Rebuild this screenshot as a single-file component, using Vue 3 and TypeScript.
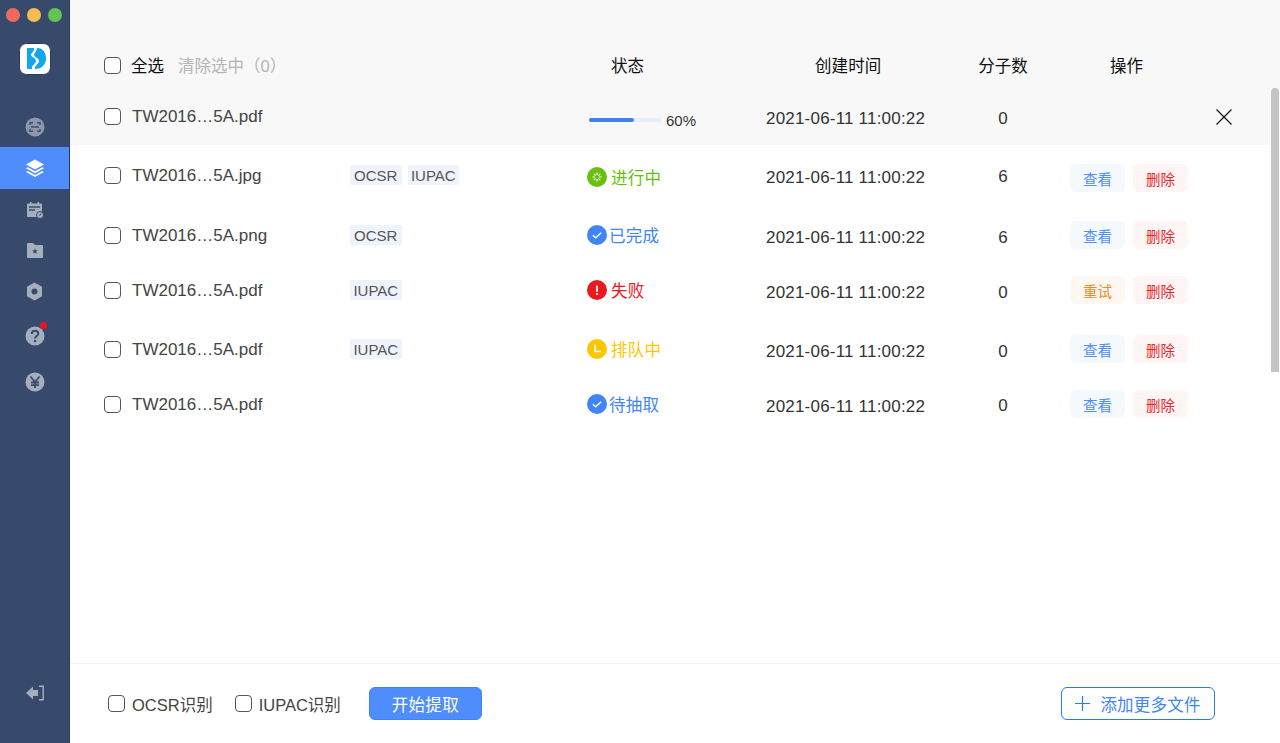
<script setup lang="ts">
type Status = 'running' | 'done' | 'failed' | 'queued' | 'waiting'

interface FileRow {
  name: string
  tags: string[]
  status: Status
  count: number
}

const statusText: Record<Status, string> = {
  running: '进行中',
  done: '已完成',
  failed: '失败',
  queued: '排队中',
  waiting: '待抽取',
}

const rows: FileRow[] = [
  { name: 'TW2016…5A.jpg', tags: ['OCSR', 'IUPAC'], status: 'running', count: 6 },
  { name: 'TW2016…5A.png', tags: ['OCSR'], status: 'done', count: 6 },
  { name: 'TW2016…5A.pdf', tags: ['IUPAC'], status: 'failed', count: 0 },
  { name: 'TW2016…5A.pdf', tags: ['IUPAC'], status: 'queued', count: 0 },
  { name: 'TW2016…5A.pdf', tags: [], status: 'waiting', count: 0 },
]

const progress = 60
const time = '2021-06-11 11:00:22'
</script>

<template>
  <div class="app">
    <aside class="sidebar">
      <div class="lights">
        <span class="light red"></span>
        <span class="light yellow"></span>
        <span class="light green"></span>
      </div>
      <div class="logo">
        <svg width="32" height="32" viewBox="0 0 32 32">
          <rect x="0.500" y="0.500" width="31" height="31" rx="7" fill="#fff" stroke="#2b3c5a" />
          <path d="M8 5h7c1 3-3 5-3 7s5 3 5 6-5 4-4 8H8z" fill="#12a6ee" />
          <path d="M18 5c6 0 9 5 9 10.500S23 26 16 26c-1-3 4-5 4-8s-5-4-5-6 3-4 3-7z" fill="#12a6ee" />
        </svg>
      </div>

      <nav class="nav">
        <div class="nav-item">
          <svg width="20" height="20" viewBox="0 0 20 20">
            <circle cx="10" cy="10" r="9.500" fill="#8d97a9" />
            <path d="M5 8V5.800h3M12 5.800h3V8M5 12v2.200h3M12 14.200h3V12M6 10h8" fill="none" stroke="#3f5070" stroke-width="1.500" />
          </svg>
        </div>
        <div class="nav-item active">
          <svg width="20" height="20" viewBox="0 0 20 20" fill="#fff">
            <path d="M10 1.500l9 5-9 5-9-5z" />
            <path d="M2.800 9.300L10 13.300l7.200-4 1.800 1-9 5-9-5z" />
            <path d="M2.800 13L10 17l7.200-4 1.800 1-9 5-9-5z" />
          </svg>
        </div>
        <div class="nav-item calendar">
          <svg width="18" height="17" viewBox="0 0 18 17">
            <path d="M2 1.500h2V0h1.500v1.500h6V0H13v1.500h2a1 1 0 0 1 1 1V14a1 1 0 0 1-1 1H2a1 1 0 0 1-1-1V2.500a1 1 0 0 1 1-1z" fill="#a5aebd" />
            <path d="M3 5h11M3 8h6" stroke="#3a4b6c" stroke-width="1.400" />
            <circle cx="14" cy="13" r="3.500" fill="#a5aebd" stroke="#3a4b6c" />
            <path d="M14.800 11.500L13.600 14" stroke="#3a4b6c" />
          </svg>
        </div>
        <div class="nav-item">
          <svg width="18" height="17" viewBox="0 0 18 17">
            <path d="M1 2a1 1 0 0 1 1-1h5l2 2h7a1 1 0 0 1 1 1v11a1 1 0 0 1-1 1H2a1 1 0 0 1-1-1z" fill="#a5aebd" />
            <path d="M9 6.500l.8 1.800 1.900.2-1.400 1.300.4 1.900L9 10.800l-1.700.9.400-1.900-1.400-1.300 1.900-.2z" fill="#3a4b6c" />
          </svg>
        </div>
        <div class="nav-item">
          <svg width="17" height="19" viewBox="0 0 17 19">
            <path d="M8.500 0.500l7.500 4.300v9.400l-7.500 4.300L1 14.200V4.800z" fill="#a5aebd" />
            <circle cx="8.500" cy="9.500" r="3" fill="#3a4b6c" />
          </svg>
        </div>
        <div class="nav-item help">
          <svg width="20" height="20" viewBox="0 0 20 20">
            <circle cx="10" cy="10" r="9.500" fill="#a5aebd" />
            <path d="M6.800 8c0-2 1.400-3.200 3.300-3.200s3.200 1.200 3.200 2.900c0 2.300-3.200 2.400-3.200 4.700" fill="none" stroke="#3a4b6c" stroke-width="2" />
            <circle cx="10.100" cy="15" r="1.300" fill="#3a4b6c" />
          </svg>
          <span class="dot"></span>
        </div>
        <div class="nav-item yen">
          <svg width="20" height="20" viewBox="0 0 20 20">
            <circle cx="10" cy="10" r="9.500" fill="#a5aebd" />
            <path d="M5.500 4.500L10 10l4.500-5.500M10 10v6M6 10.500h8M6 13.200h8" fill="none" stroke="#3a4b6c" stroke-width="1.800" />
          </svg>
        </div>
      </nav>

      <div class="logout">
        <svg width="20" height="16" viewBox="0 0 20 16">
          <path d="M1 8l7-6.500V5h5v6H8v3.500z" fill="#a5aebd" />
          <path d="M14 1.200h4.200v13.600H14" fill="none" stroke="#a5aebd" stroke-width="1.400" />
        </svg>
      </div>
    </aside>

    <main class="main">
      <header class="head grid">
        <div class="select-all">
          <span class="check"></span>
          <span class="all">全选</span>
          <span class="clear">清除选中（0）</span>
        </div>
        <div></div>
        <div class="h-status">状态</div>
        <div class="h-time">创建时间</div>
        <div class="h-count">分子数</div>
        <div class="h-action">操作</div>
      </header>

      <section class="list">
        <div class="row uploading grid">
          <div class="name-cell">
            <span class="check"></span>
            <span class="name">TW2016…5A.pdf</span>
          </div>
          <div></div>
          <div class="progress">
            <div class="track">
              <div class="fill" :style="{ width: progress + '%' }"></div>
            </div>
            <span class="percent">{{ progress }}%</span>
          </div>
          <div class="time">{{ time }}</div>
          <div class="count">0</div>
          <div class="close">
            <svg width="16" height="16" viewBox="0 0 16 16">
              <path d="M0.500 0.500l15 15M15.500 0.500l-15 15" stroke="#111" stroke-width="1.200" />
            </svg>
          </div>
        </div>

        <div v-for="(row, i) in rows" :key="i" class="row grid">
          <div class="name-cell">
            <span class="check"></span>
            <span class="name">{{ row.name }}</span>
          </div>
          <div class="tags">
            <span v-for="tag in row.tags" :key="tag" class="tag">{{ tag }}</span>
          </div>
          <div class="status" :class="row.status">
            <svg width="20" height="20" viewBox="0 0 20 20">
              <circle cx="10" cy="10" r="10" fill="currentColor" />
              <g v-if="row.status === 'running'" stroke="#fff" stroke-width="1.200">
                <path d="M10 5.500v2.500M10 12v2.500M5.500 10H8M12 10h2.500M6.800 6.800l1.800 1.800M11.400 11.400l1.800 1.800M13.200 6.800l-1.800 1.800M8.600 11.400l-1.800 1.800" />
              </g>
              <path v-else-if="row.status === 'done' || row.status === 'waiting'" d="M5.800 10.200l3 2.600 5.400-5" fill="none" stroke="#fff" stroke-width="1.300" />
              <g v-else-if="row.status === 'failed'" fill="#fff">
                <rect x="9.100" y="5.500" width="1.800" height="6.500" rx="0.800" />
                <circle cx="10" cy="14" r="1.100" />
              </g>
              <path v-else d="M8 5.500v7h6" fill="none" stroke="#fff" stroke-width="1.500" />
            </svg>
            <span>{{ statusText[row.status] }}</span>
          </div>
          <div class="time">{{ time }}</div>
          <div class="count">{{ row.count }}</div>
          <div class="actions">
            <button v-if="row.status === 'failed'" class="btn orange">重试</button>
            <button v-else class="btn blue">查看</button>
            <button class="btn pink">删除</button>
          </div>
        </div>

        <div class="scrollbar"></div>
      </section>

      <footer class="foot">
        <label class="opt"><span class="check"></span>OCSR识别</label>
        <label class="opt second"><span class="check"></span>IUPAC识别</label>
        <button class="start">开始提取</button>
        <button class="add">
          <svg width="15" height="15" viewBox="0 0 15 15">
            <path d="M7.500 0v15M0 7.500h15" stroke="#2f78ee" stroke-width="1.200" />
          </svg>
          添加更多文件
        </button>
      </footer>
    </main>
  </div>
</template>

<style>
html,
body {
  margin: 0;
  background: #fff;
}
</style>

<style scoped>
.app {
  display: flex;
  width: 1280px;
  height: 743px;
  overflow: hidden;
  font-family: "Liberation Sans", "Noto Sans CJK SC", sans-serif;
  font-size: 16.500px;
  color: #333;
}

.sidebar {
  flex: 0 0 70px;
  box-sizing: border-box;
  display: flex;
  flex-direction: column;
  align-items: center;
  background: #374a6b;
  border-right: 1px solid #2b3c5a;
}

.lights {
  display: flex;
  gap: 7px;
  width: 100%;
  box-sizing: border-box;
  padding: 8px 0 0 6px;
}

.light {
  width: 14px;
  height: 14px;
  border-radius: 50%;
}

.red {
  background: #ee6a5f;
}

.yellow {
  background: #f5bd4f;
}

.green {
  background: #61c454;
}

.logo {
  height: 32px;
  margin-top: 21px;
}

.nav {
  display: flex;
  flex-direction: column;
  width: 100%;
  margin-top: 31px;
}

.nav-item {
  height: 41px;
  display: flex;
  align-items: center;
  justify-content: center;
  position: relative;
}

.nav-item.active {
  height: 42px;
  background: #4f8dfd;
}

.nav-item.calendar {
  padding-top: 2px;
  box-sizing: border-box;
}

.nav-item.help {
  height: 47px;
}

.nav-item.yen {
  height: 45px;
}

.dot {
  position: absolute;
  top: 10px;
  left: 40px;
  width: 7px;
  height: 7px;
  border-radius: 50%;
  background: #f0141e;
}

.logout {
  margin-top: auto;
  margin-bottom: 42px;
  height: 16px;
}

.main {
  flex: 1;
  min-width: 0;
  display: flex;
  flex-direction: column;
}

.grid {
  display: grid;
  grid-template-columns: 246px 237px 179px 200px 74px 1fr;
  align-items: center;
  padding-left: 34px;
}

.head {
  height: 88px;
  box-sizing: border-box;
  padding-top: 42px;
  background: #f8f8f8;
  color: #111;
}

.select-all,
.name-cell {
  display: flex;
  align-items: center;
}

.check {
  flex: none;
  box-sizing: border-box;
  width: 17px;
  height: 17px;
  border: 1.500px solid #555;
  border-radius: 4px;
  background: #fff;
}

.all {
  margin-left: 10px;
}

.clear {
  margin-left: 14px;
  color: #b5b5b5;
  white-space: nowrap;
}

.h-status {
  padding-left: 24px;
}

.h-time {
  padding-left: 49px;
  letter-spacing: 0.100px;
}

.h-count {
  text-align: center;
}

.h-action {
  padding-left: 70px;
}

.list {
  flex: 1;
  position: relative;
  min-height: 0;
}

/* the rows of the list are not evenly spaced */
.row {
  height: 60px;
  margin-right: 10px;
}

.row.uploading {
  height: 57px;
  background: #f8f8f8;
}

.row:nth-child(3),
.row:nth-child(5) {
  margin-bottom: -5px;
}

.row:nth-child(4) {
  margin-bottom: -1px;
}

.row:nth-child(2) .status {
  margin-top: 4px;
}

.row:nth-child(2) .actions {
  margin-top: 6px;
}

.uploading .name-cell {
  margin-bottom: 1px;
}

.name {
  margin-left: 11px;
  padding-top: 2px;
  font-size: 17px;
  color: #444;
  white-space: nowrap;
}

.tags {
  display: flex;
  gap: 6px;
}

.tag {
  display: flex;
  align-items: center;
  justify-content: center;
  width: 51.500px;
  height: 20.500px;
  background: #eff3fd;
  border-radius: 2px;
  font-size: 15px;
  color: #555;
}

.status {
  display: flex;
  align-items: center;
  gap: 4px;
  letter-spacing: 0.200px;
}

.status.done,
.status.waiting {
  gap: 2px;
}

.running {
  color: #66c10f;
}

.done,
.waiting {
  color: #4185f5;
}

.failed {
  color: #e8191f;
}

.queued {
  color: #fdc602;
}

.progress {
  display: flex;
  align-items: center;
  padding-left: 2px;
  margin-top: 7px;
}

.track {
  width: 72px;
  height: 4px;
  background: #e6edf8;
  border-radius: 2px;
}

.fill {
  height: 100%;
  padding-right: 2px;
  background: #3f82f0;
  border-radius: 2px;
}

.percent {
  margin-left: 5px;
  font-size: 15px;
}

.time {
  margin-top: 6px;
  font-size: 17px;
  letter-spacing: 0.200px;
  color: #333;
  white-space: nowrap;
}

.uploading .time {
  margin-top: 4px;
}

.count {
  margin-top: 6px;
  font-size: 17px;
  text-align: center;
}

.uploading .count {
  margin-top: 4px;
}

.row:nth-child(2) .count,
.row:nth-child(6) .count {
  margin-top: 4px;
}

.close {
  height: 16px;
  padding-left: 176px;
}

.actions {
  display: flex;
  gap: 8px;
  padding-left: 30px;
}

.btn {
  width: 55px;
  height: 28px;
  border: 0;
  border-radius: 6px;
  padding: 0;
  font-family: inherit;
  font-size: 14.500px;
}

.btn.blue {
  background: #f4f8ff;
  color: #4d8ef7;
}

.btn.pink {
  background: #fff5f5;
  color: #e8262a;
}

.btn.orange {
  background: #fff8f2;
  color: #f08a24;
}

.scrollbar {
  position: absolute;
  top: 0;
  right: 1px;
  width: 8px;
  height: 284px;
  border-radius: 4px 4px 0 0;
  background: #c4c4c4;
}

.foot {
  height: 80px;
  box-sizing: border-box;
  border-top: 1px solid #f0f0f0;
  display: flex;
  align-items: center;
  padding-left: 38px;
}

.opt {
  display: flex;
  align-items: center;
  gap: 7px;
  margin-right: 22px;
  color: #444;
}

.opt.second {
  margin-right: 28px;
}

.start {
  width: 113px;
  height: 33px;
  border: 1px solid #3f82f0;
  border-radius: 6px;
  background: #4f8dfd;
  color: #fff;
  font-family: inherit;
  font-size: 16.500px;
  letter-spacing: 0.300px;
  padding: 0;
}

.add {
  display: flex;
  align-items: center;
  justify-content: center;
  gap: 10px;
  width: 154px;
  height: 33px;
  margin-left: auto;
  margin-right: 65px;
  box-sizing: border-box;
  border: 1.500px solid #2f78ee;
  border-radius: 6px;
  background: #fff;
  color: #4185f5;
  font-family: inherit;
  font-size: 16.500px;
  letter-spacing: 0.200px;
  padding: 0;
}
</style>
